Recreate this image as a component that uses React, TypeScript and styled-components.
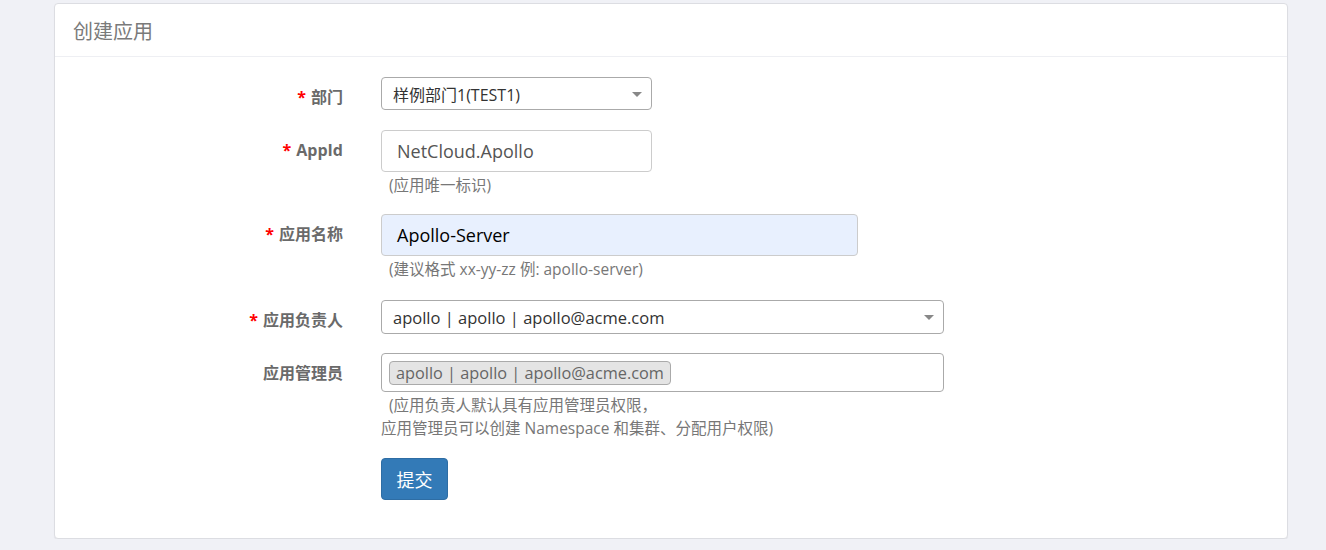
import styled, { createGlobalStyle } from "styled-components";

const GlobalStyle = createGlobalStyle`
  html, body {
    margin: 0;
    padding: 0;
    background: #f0f1f6;
    font-family: "Open Sans", "Noto Sans CJK SC", sans-serif;
  }
`;

const Panel = styled.div`
  margin: 3px 38px 0 54px;
  background: #fff;
  border: 1px solid #dcdde2;
  border-radius: 4px;
  box-shadow: 0 1px 1px rgba(0, 0, 0, 0.05);
`;

const PanelHeading = styled.div`
  height: 52px;
  display: flex;
  align-items: center;
  padding-left: 18px;
  border-bottom: 1px solid #eeeff3;
  font-size: 20px;
  color: #7a7a7a;
  font-family: "Noto Sans CJK SC", sans-serif;
`;

const Form = styled.form`
  padding: 20px 0 38px;
  display: flex;
  flex-direction: column;
`;

// a row: right-aligned label + control
const Row = styled.div<{ $gap: number }>`
  display: grid;
  grid-template-columns: 288px 1fr;
  column-gap: 38px;
  margin-bottom: ${({ $gap }) => $gap}px;
`;

const Label = styled.label`
  text-align: right;
  padding-top: 10px;
  line-height: 20px;
  font-size: 16px;
  font-weight: bold;
  color: #6a6a6a;
  font-family: "Open Sans", "Noto Sans CJK SC", sans-serif;
  white-space: nowrap;
`;

const Star = styled.span`
  color: #f00;
  margin-right: 5px;
`;

const Field = styled.div<{ $w: number }>`
  width: ${({ $w }) => $w}px;
`;

const SelectBox = styled.div<{ $h: number; $size: number }>`
  position: relative;
  box-sizing: border-box;
  height: ${({ $h }) => $h}px;
  border: 1px solid #aaa;
  border-radius: 4px;
  display: flex;
  align-items: center;
  padding-left: 11px;
  font-size: ${({ $size }) => $size}px;
  color: #333;
  font-family: "Open Sans", "Noto Sans CJK SC", sans-serif;
`;

const Arrow = styled.span`
  position: absolute;
  right: 9px;
  top: 50%;
  margin-top: -2px;
  border-left: 5px solid transparent;
  border-right: 5px solid transparent;
  border-top: 5px solid #888;
`;

const TextInput = styled.div<{ $filled?: boolean }>`
  box-sizing: border-box;
  height: 42px;
  border: 1px solid #ccc;
  border-radius: 4px;
  display: flex;
  align-items: center;
  padding-left: 15px;
  font-size: 18px;
  color: ${({ $filled }) => ($filled ? "#000" : "#555")};
  background: ${({ $filled }) => ($filled ? "#e8f0fe" : "#fff")};
  font-family: "Open Sans", sans-serif;
`;

const MultiBox = styled.div`
  box-sizing: border-box;
  height: 39px;
  border: 1px solid #aaa;
  border-radius: 4px;
  display: flex;
  align-items: center;
  padding-left: 7px;
`;

const Tag = styled.span`
  box-sizing: border-box;
  height: 24px;
  display: inline-flex;
  align-items: center;
  padding: 0 6px;
  background: #e4e4e4;
  border: 1px solid #aaa;
  border-radius: 4px;
  font-size: 16.3px;
  color: #666;
  font-family: "Open Sans", sans-serif;
`;

const Help = styled.div<{ $top: number; $lh: number }>`
  margin-top: ${({ $top }) => $top}px;
  text-indent: 8px;
  font-size: 15.5px;
  line-height: ${({ $lh }) => $lh}px;
  color: #777;
  font-family: "Open Sans", "Noto Sans CJK SC", sans-serif;
  white-space: nowrap;
`;

const SubmitButton = styled.button`
  width: 67px;
  height: 42px;
  background: #337ab7;
  border: 1px solid #2e6da4;
  border-radius: 4px;
  color: #fff;
  font-size: 18px;
  font-family: "Noto Sans CJK SC", sans-serif;
  padding: 0;
  cursor: pointer;
`;

function Req({ children }: { children: React.ReactNode }) {
  return (
    <Label>
      <Star>*</Star>
      {children}
    </Label>
  );
}

export default function App() {
  return (
    <>
      <GlobalStyle />
      <Panel>
        <PanelHeading>创建应用</PanelHeading>
        <Form>
          <Row $gap={20}>
            <Req>部门</Req>
            <Field $w={271}>
              <SelectBox $h={33} $size={16}>
                样例部门1(TEST1)
                <Arrow />
              </SelectBox>
            </Field>
          </Row>

          <Row $gap={19}>
            <Req>AppId</Req>
            <Field $w={271}>
              <TextInput>NetCloud.Apollo</TextInput>
              <Help $top={3} $lh={20}>(应用唯一标识)</Help>
            </Field>
          </Row>

          <Row $gap={21}>
            <Req>应用名称</Req>
            <Field $w={477}>
              <TextInput $filled>Apollo-Server</TextInput>
              <Help $top={3} $lh={20}>(建议格式 xx-yy-zz 例: apollo-server)</Help>
            </Field>
          </Row>

          <Row $gap={19}>
            <Req>应用负责人</Req>
            <Field $w={563}>
              <SelectBox $h={34} $size={16.5}>
                apollo | apollo | apollo@acme.com
                <Arrow />
              </SelectBox>
            </Field>
          </Row>

          <Row $gap={18}>
            <Label>应用管理员</Label>
            <Field $w={563}>
              <MultiBox>
                <Tag>apollo | apollo | apollo@acme.com</Tag>
              </MultiBox>
              <Help $top={2} $lh={23}>
                (应用负责人默认具有应用管理员权限，
                <br />
                应用管理员可以创建 Namespace 和集群、分配用户权限)
              </Help>
            </Field>
          </Row>

          <Row $gap={0}>
            <span />
            <div>
              <SubmitButton type="button">提交</SubmitButton>
            </div>
          </Row>
        </Form>
      </Panel>
    </>
  );
}
